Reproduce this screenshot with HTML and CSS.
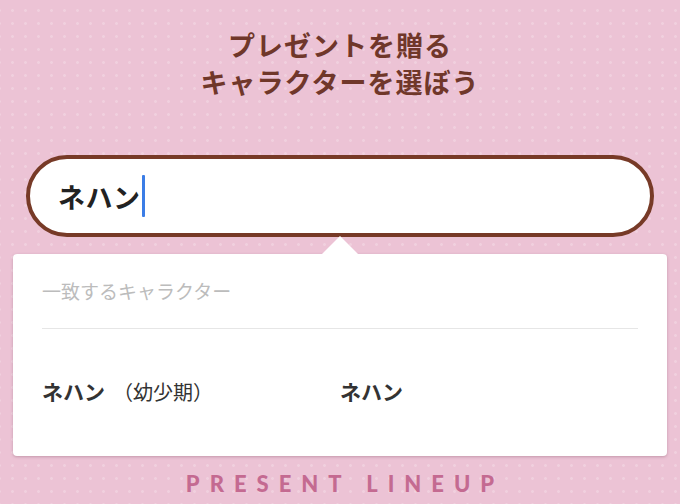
FILE: index.html
```html
<!DOCTYPE html>
<html lang="ja">
<head>
<meta charset="utf-8">
<link rel="stylesheet" href="styles.css">
</head>
<body>
<div class="page">
  <h1 class="title">プレゼントを贈る<br>キャラクターを選ぼう</h1>
  <div class="search">
    <span class="search-text">ネハン</span><span class="caret"></span>
  </div>
  <div class="dropdown">
    <div class="dd-head">一致するキャラクター</div>
    <div class="dd-list">
      <div class="dd-item"><b>ネハン</b><span class="dd-sub">（幼少期）</span></div>
      <div class="dd-item"><b>ネハン</b></div>
    </div>
  </div>
  <div class="lineup">PRESENT LINEUP</div>
</div>
</body>
</html>
```
FILE: styles.css
```css
html, body {
  margin: 0;
  padding: 0;
}
body {
  width: 680px;
  height: 504px;
  overflow: hidden;
  background-color: #ecc3d5;
  background-image: radial-gradient(circle, rgba(255,255,255,0.22) 1.2px, transparent 1.6px);
  background-size: 13px 13px;
  background-position: 6px 4px;
  font-family: "Noto Sans CJK JP", "Noto Sans", sans-serif;
}
.page {
  padding-top: 26px;
  display: flex;
  flex-direction: column;
}
.title {
  margin: 0;
  text-align: center;
  font-size: 27px;
  line-height: 37px;
  font-weight: 700;
  color: #70372a;
  letter-spacing: 1px;
}
.search {
  margin: 55px 26px 0;
  height: 74px;
  border: 4px solid #773a27;
  border-radius: 41px;
  background: #fff;
  display: flex;
  align-items: center;
  padding-left: 28px;
}
.search-text {
  font-size: 27px;
  font-weight: 700;
  color: #222;
  letter-spacing: 0.5px;
}
.caret {
  width: 3px;
  height: 42px;
  background: #3b7de6;
  border-radius: 1px;
  margin-left: 1px;
}
.dropdown {
  position: relative;
  margin: 17px 13px 0;
  height: 202px;
  background: #fff;
  border-radius: 4px;
  box-shadow: 0 1px 3px rgba(120, 70, 90, 0.35);
  padding: 0 29px;
}
.dropdown::before {
  content: "";
  position: absolute;
  top: -18px;
  left: 309px;
  border-left: 18px solid transparent;
  border-right: 18px solid transparent;
  border-bottom: 18px solid #fff;
}
.dd-head {
  height: 74px;
  line-height: 74px;
  border-bottom: 1px solid #e6e6e6;
  font-size: 19px;
  color: #bcbcbc;
}
.dd-list {
  display: grid;
  grid-template-columns: 1fr 1fr;
  padding-top: 43px;
}
.dd-item {
  font-size: 21px;
  line-height: 38px;
  color: #333;
}
.dd-item b {
  font-weight: 700;
}
.dd-sub {
  font-size: 20px;
  font-weight: 400;
  margin-left: 8px;
}
.lineup {
  margin-top: 14px;
  text-align: center;
  font-family: Lato, "Noto Sans", sans-serif;
  font-weight: 900;
  font-size: 22px;
  letter-spacing: 10px;
  padding-left: 10px;
  color: #c46a91;
}
```
